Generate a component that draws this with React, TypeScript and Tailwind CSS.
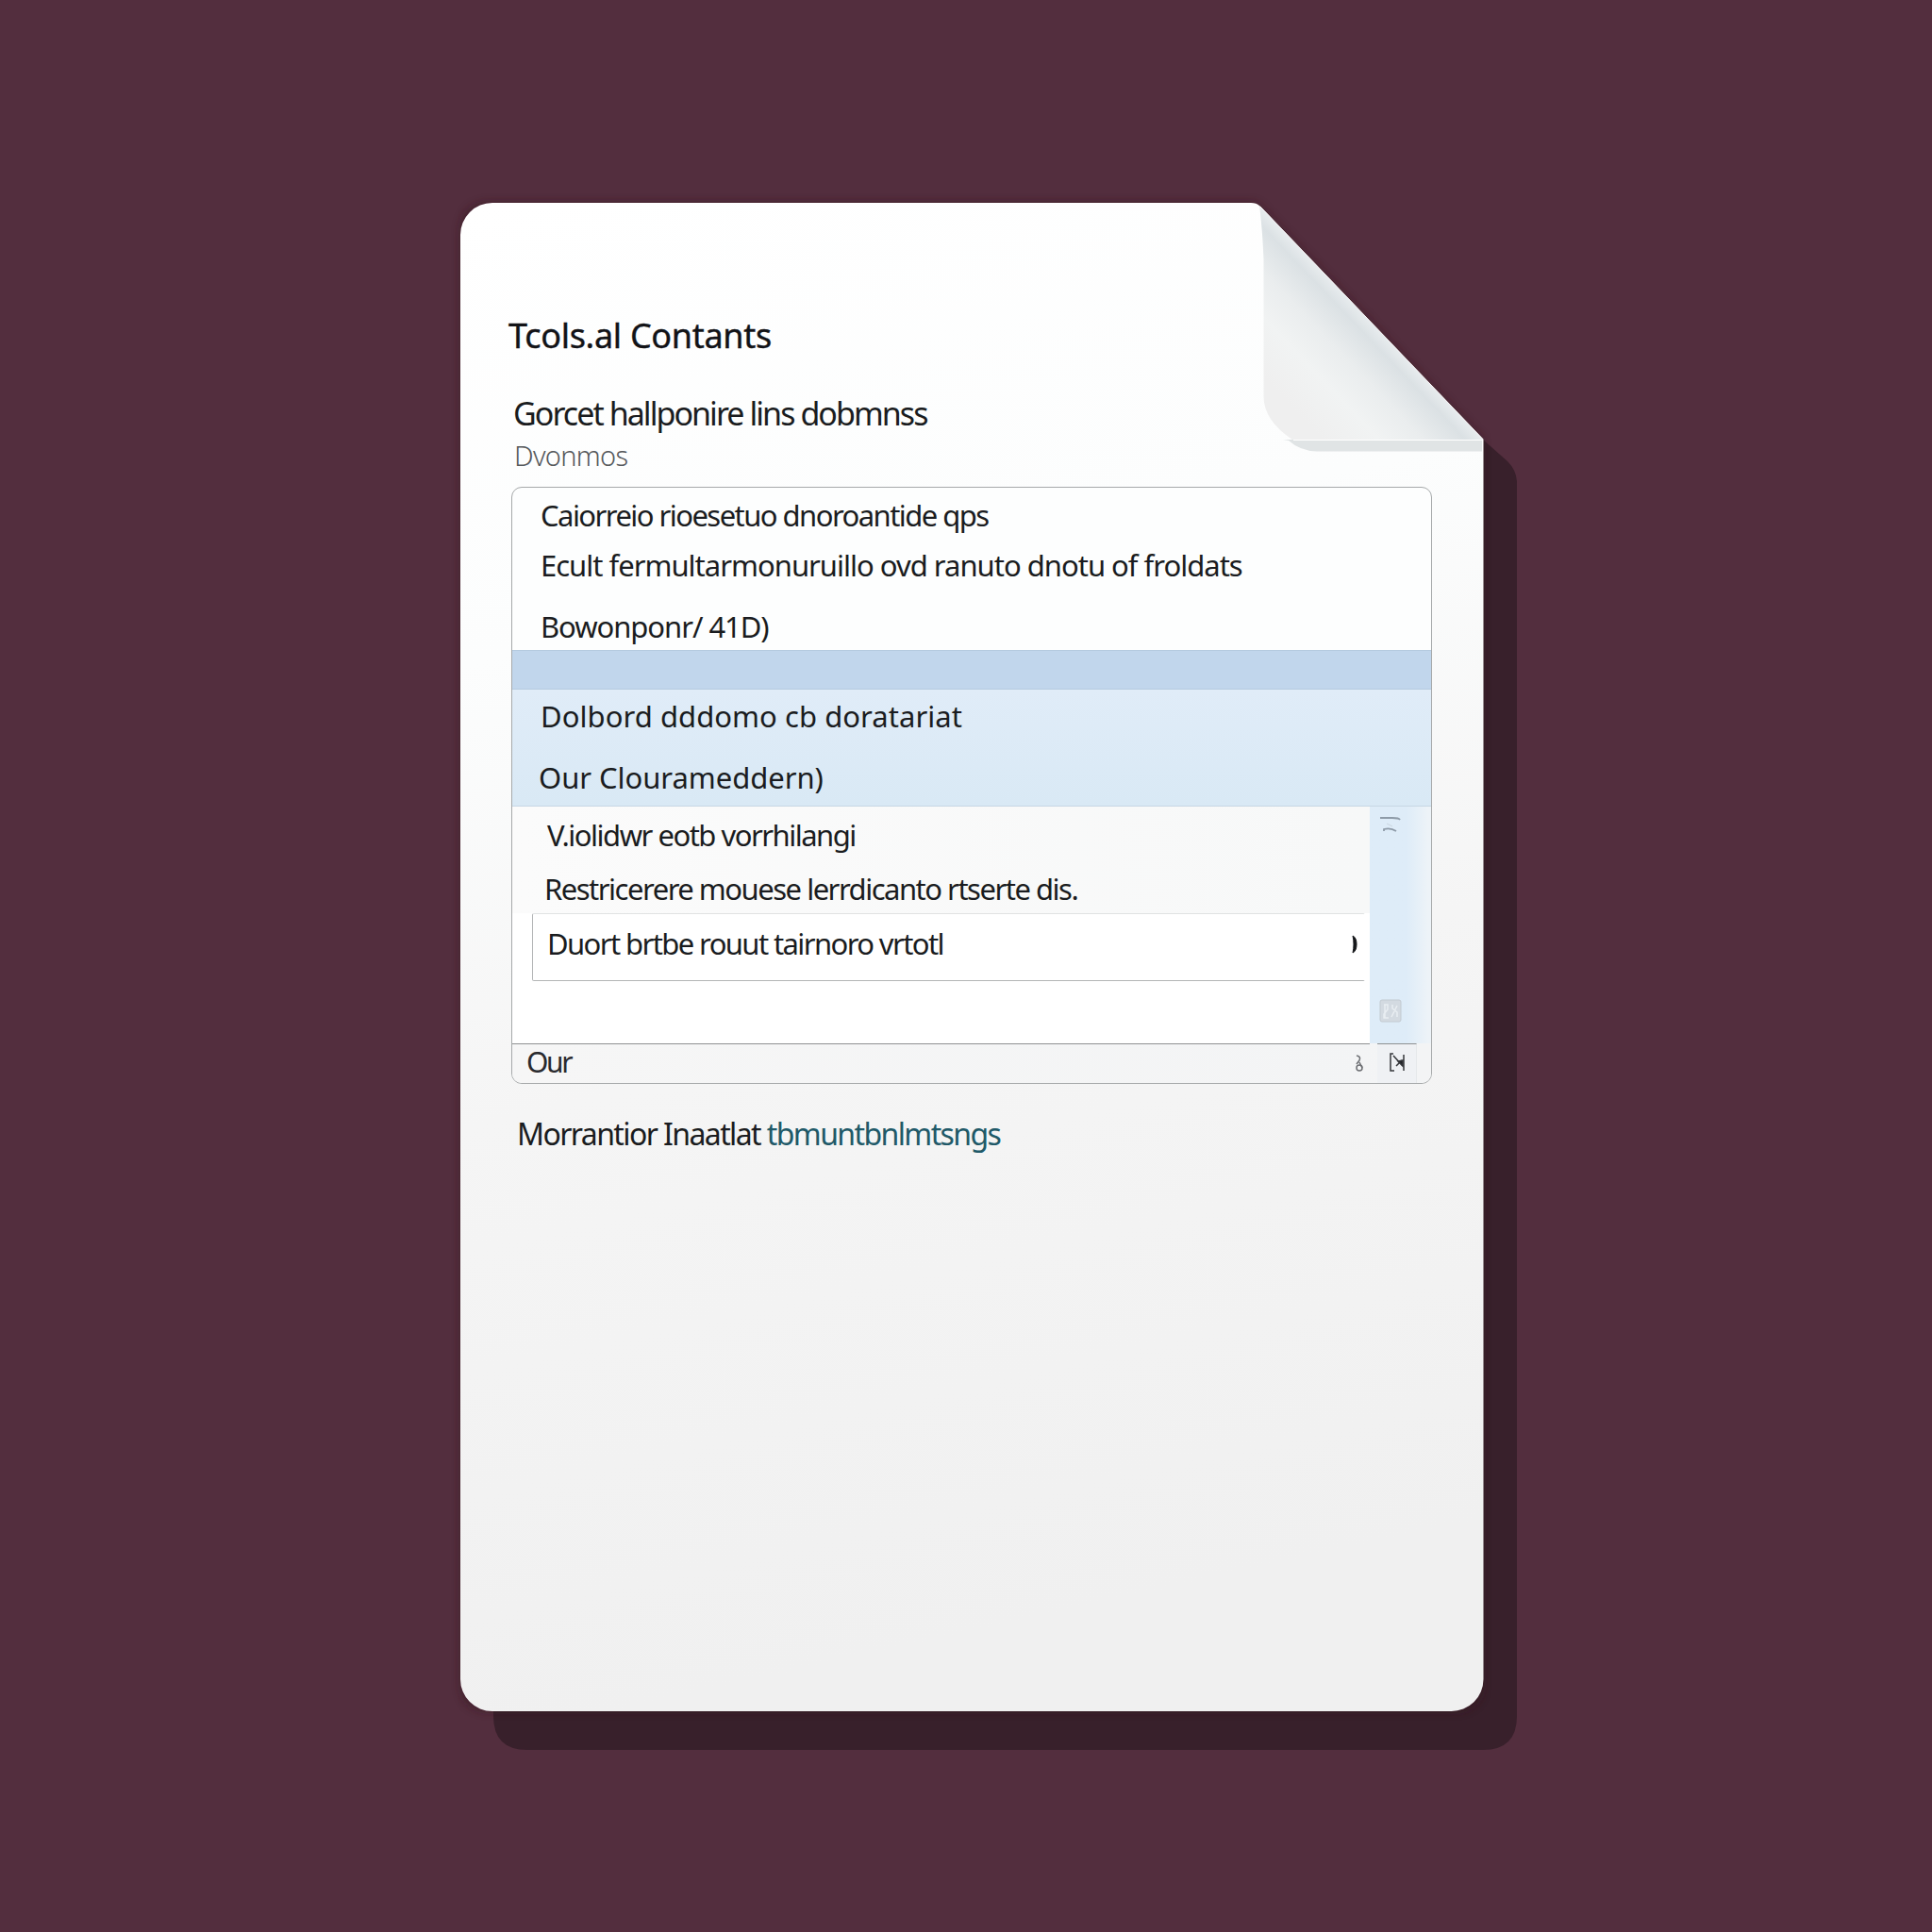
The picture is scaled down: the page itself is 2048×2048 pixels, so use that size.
import type { ReactNode } from "react";

function Line({ className, children }: { className: string; children: ReactNode }) {
  return (
    <div className={`flex shrink-0 items-center whitespace-pre ${className}`}>
      <span>{children}</span>
    </div>
  );
}

function PageShape() {
  return (
    <svg className="absolute inset-0" width="2048" height="2048" viewBox="0 0 2048 2048">
      <defs>
        <linearGradient id="paper" x1="0" y1="0" x2="0.15" y2="1">
          <stop offset="0" stopColor="#ffffff" />
          <stop offset="0.3" stopColor="#fcfdfd" />
          <stop offset="0.6" stopColor="#f5f5f5" />
          <stop offset="1" stopColor="#f0f0f0" />
        </linearGradient>
        <linearGradient id="fold" gradientUnits="userSpaceOnUse" x1="1455" y1="341" x2="1365" y2="427">
          <stop offset="0" stopColor="#e9edef" />
          <stop offset="0.12" stopColor="#dbe1e4" />
          <stop offset="0.38" stopColor="#eaedee" />
          <stop offset="0.65" stopColor="#f1f3f3" />
          <stop offset="1" stopColor="#efefef" />
        </linearGradient>
        <filter id="soft" x="-10%" y="-10%" width="120%" height="120%">
          <feGaussianBlur stdDeviation="5" />
        </filter>
      </defs>
      <path
        d="M523 1700V1819Q523 1855 559 1855H1572Q1608 1855 1608 1819V512Q1608 499 1598 489L1572 466V1700Z"
        fill="#38202b"
      />
      <path
        d="M520 215H1326Q1333 215 1337 220L1572 466V1782Q1572 1814 1540 1814H520Q488 1814 488 1782V249Q488 215 520 215Z"
        fill="#35131f"
        opacity="0.6"
        filter="url(#soft)"
      />
      <path
        d="M522 215H1326Q1332 215 1335 218L1572.5 466V1780A34 34 0 0 1 1538 1814H522A34 34 0 0 1 488 1780V249A34 34 0 0 1 522 215Z"
        fill="url(#paper)"
      />
      <path d="M1360 466H1571V478.500H1396Q1378 478 1366 467Z" fill="#e0e4e5" />
      <path d="M1335 218L1572 466H1370Q1340 446 1339.500 421V275Q1338 240 1335 218Z" fill="url(#fold)" />
      <path d="M1336 219L1572 465.500" stroke="#f6f2f5" strokeWidth="1" fill="none" />
      <path d="M1371 466.500H1572" stroke="#fff" strokeWidth="1" />
    </svg>
  );
}

function ScrollGutter() {
  return (
    <div className="flex h-[251px] w-[65px] shrink-0 flex-col justify-between bg-linear-to-r from-[#deecf8] from-60% to-[#edf3f8] to-95% pt-[9px] pb-[22px] pl-[10px]">
      <svg width="24" height="20" viewBox="0 0 24 20" fill="none" stroke="#8e9ba8" strokeWidth="1.800">
        <path d="M1 3H14Q21 3 22 5" />
        <path d="M5 17V15Q12 13 18 17" />
        <path d="M8 9L14 12" stroke="#c9d5df" strokeWidth="1" />
      </svg>
      <svg width="24" height="25" viewBox="0 0 24 25" fill="none" stroke="#c2cad1">
        <rect x="1" y="1" width="22" height="23" rx="2" fill="#d3dae1" />
        <path d="M5 6H9V11L5 16V20H10M14 6V10L19 14V19M13 19L19 7M6 6V20" stroke="#e9eef2" strokeWidth="1.500" />
      </svg>
    </div>
  );
}

function ListPanel() {
  return (
    <section className="mt-[12px] flex h-[633px] w-[976px] flex-col overflow-hidden rounded-[11px] border border-[#a6a9aa] bg-[#fdfefe] text-[31px]">
      <div className="flex h-[172px] shrink-0 flex-col pt-[4px] pl-[30px]">
        <Line className="h-[50px] tracking-[-1.55px]">Caiorreio rioesetuo dnoroantide qps</Line>
        <Line className="h-[56px] tracking-[-1px]">Ecult fermultarmonuruillo ovd ranuto dnotu of froldats</Line>
        <Line className="h-[75px] tracking-[-1.05px]">Bowonponr/ 41D)</Line>
      </div>
      <div className="h-[42px] shrink-0 border-y border-[#b4cadf] bg-[#c1d6ec]" />
      <div className="flex h-[124px] shrink-0 flex-col border-b border-[#c7d7e4] bg-linear-to-b from-[#e0ecf8] to-[#d9e9f5] pl-[30px]">
        <Line className="h-[56px] tracking-[0.05px]">Dolbord dddomo cb doratariat</Line>
        <Line className="-ml-[2px] h-[74px] tracking-[-0.05px]">Our Clourameddern)</Line>
      </div>
      <div className="flex h-[251px] shrink-0">
        <div className="flex w-[909px] flex-col bg-white">
          <div className="flex h-[113px] shrink-0 flex-col bg-linear-to-r from-[#fbfbfb] to-[#f7f8f8] pl-[35px]">
            <Line className="ml-[2px] h-[60px] tracking-[-1.5px]">V.iolidwr eotb vorrhilangi</Line>
            <Line className="-ml-[1px] h-[55px] tracking-[-1.5px]">Restricerere mouese lerrdicanto rtserte dis.</Line>
          </div>
          <div className="ml-[21px] flex h-[72px] w-[883px] shrink-0 items-start justify-between rounded-[2px] border border-[#b3b5b6] border-t-[#e1e3e3] border-r-transparent bg-white pr-[7px] pl-[15px]">
            <Line className="h-[62px] tracking-[-1.6px]">Duort brtbe rouut tairnoro vrtotl</Line>
            <svg className="mt-[22px]" width="6" height="20" viewBox="0 0 6 20">
              <path d="M1 1Q5 3 5 10Q5 17 1 19Q2 15 2 10Q2 5 1 1Z" fill="#15171a" stroke="#15171a" />
            </svg>
          </div>
        </div>
        <ScrollGutter />
      </div>
      <footer className="flex h-[42px] shrink-0 items-center bg-linear-to-r from-[#f6f6f6] to-[#f3f4f5]">
        <div className="flex h-full w-[909px] items-start justify-between border-t border-[#8f9192] pr-[6px] pl-[15px]">
          <Line className="h-[36px] text-[30px] tracking-[-2.4px] text-[#292a2e]">Our</Line>
          <svg className="mt-[11px]" width="10" height="18" viewBox="0 0 10 18" fill="none" stroke="#6d6f73" strokeWidth="1.500">
            <path d="M2 1Q7 2 5 6L2 10M5 8L8 14" />
            <circle cx="5" cy="14" r="3" />
          </svg>
        </div>
        <div className="ml-[8px] flex h-full w-[42px] items-start justify-center border-t border-r border-t-[#8f9192] border-r-[#e5e8ea] bg-[#eff1f4] pt-[9px]">
          <svg width="18" height="20" viewBox="0 0 18 20" fill="none" stroke="#34363a" strokeWidth="1.500">
            <path d="M5 1H2V19H6M16 2V19" />
            <path d="M5 3L15 14M8 14L14 8" />
            <path d="M10 9L15 8V14Z" fill="#202226" />
          </svg>
        </div>
      </footer>
    </section>
  );
}

export default function App() {
  return (
    <main className="relative h-[2048px] w-[2048px] overflow-hidden bg-[#532e3e] font-['Noto_Sans',sans-serif] text-[#1a1c20]">
      <PageShape />
      <article className="relative ml-[488px] flex h-[1814px] w-[1085px] flex-col pt-[326px] pl-[54px]">
        <Line className="-ml-[3px] h-[60px] text-[36px] tracking-[-0.3px] text-[#121317] [-webkit-text-stroke:0.4px_#121317]">Tcols.al Contants</Line>
        <Line className="ml-[2px] h-[104px] text-[34px] tracking-[-1.95px]">Gorcet hallponire lins dobmnss</Line>
        <Line className="-mt-[27px] ml-[3px] h-[40px] text-[29px] font-light tracking-[-0.7px] text-[#55585b]">Dvonmos</Line>
        <div className="mt-px">
          <ListPanel />
        </div>
        <Line className="mt-[27px] ml-[6px] h-[52px] text-[32px] tracking-[-1.6px]">
          Morrantior Inaatlat <span className="text-[#205968]">tbmuntbnlmtsngs</span>
        </Line>
      </article>
    </main>
  );
}
